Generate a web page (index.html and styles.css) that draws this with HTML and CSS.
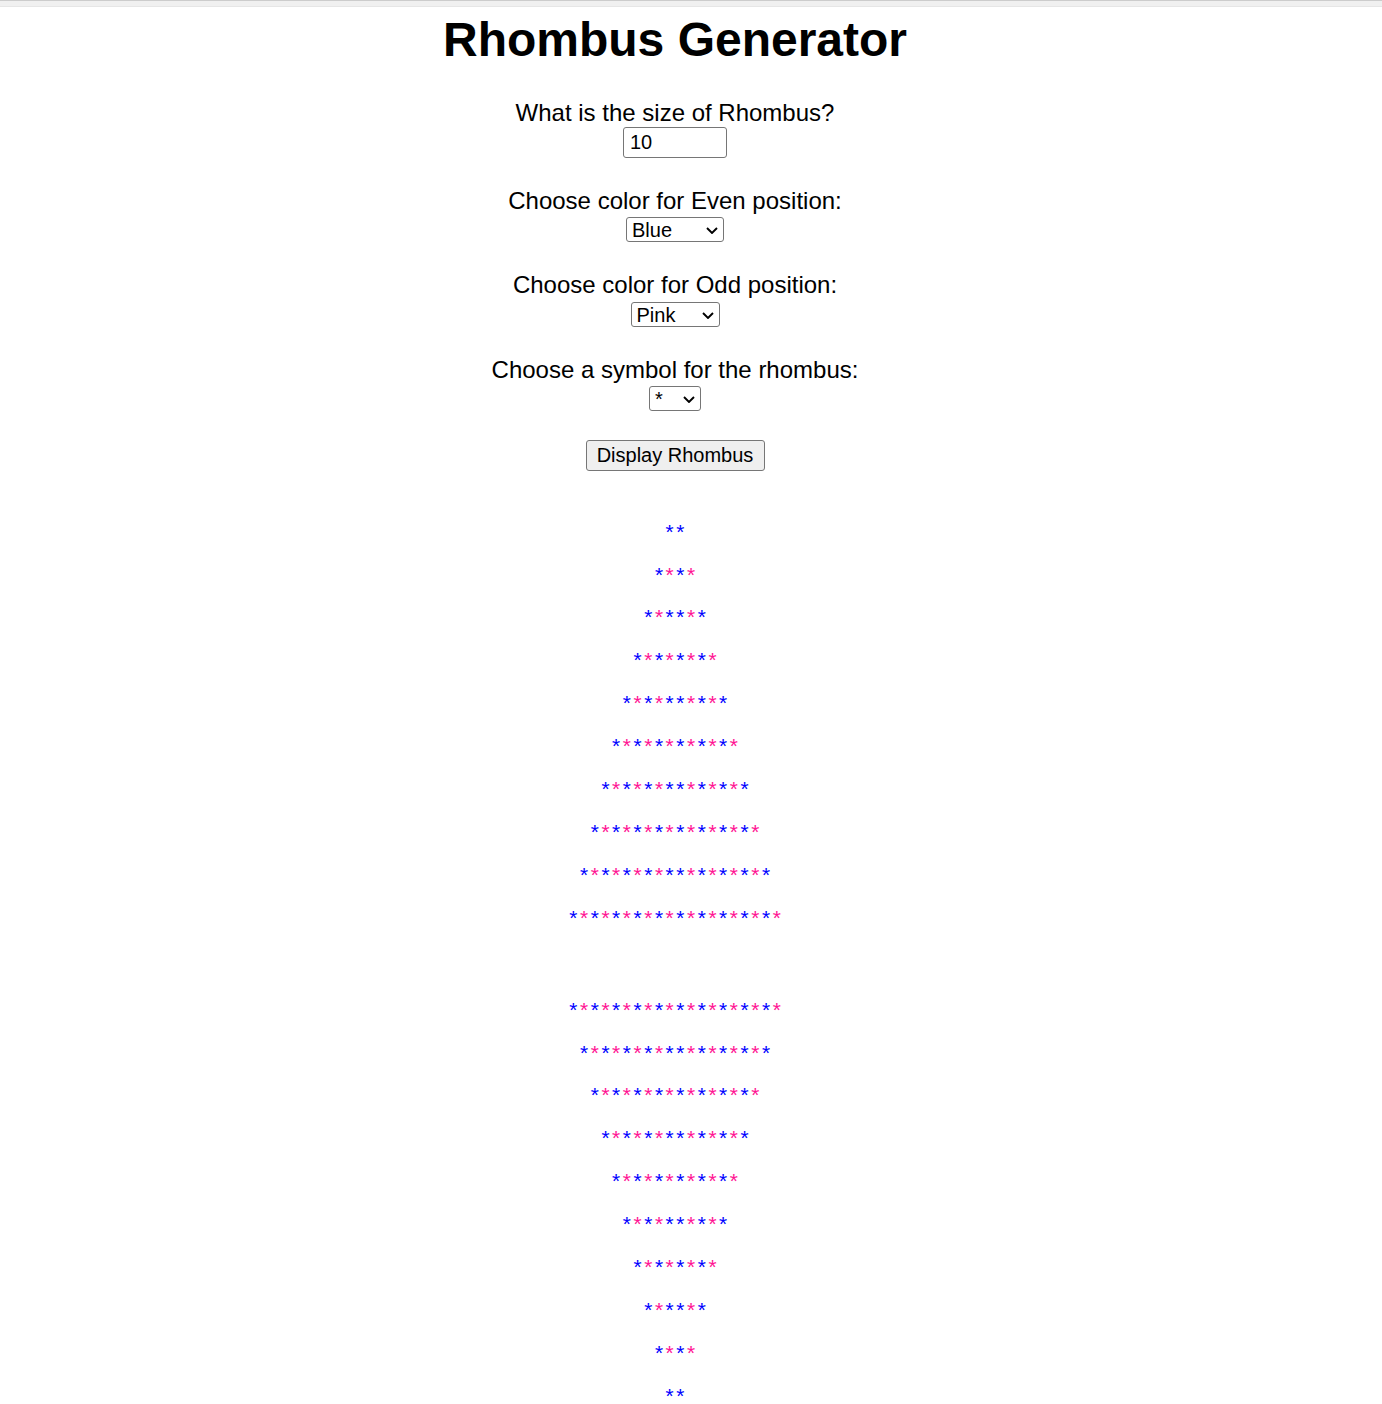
FILE: index.html
```html
<!DOCTYPE html>
<html lang="en">
<head>
<meta charset="utf-8">
<title>Rhombus Generator</title>
<link rel="stylesheet" href="styles.css">
</head>
<body>
<div class="topbar"></div>
<main class="page">
  <h1 class="title">Rhombus Generator</h1>
  <form class="form">
    <div class="field">
      <label class="label" for="size">What is the size of Rhombus?</label>
      <input class="size-input" id="size" type="text" value="10">
    </div>
    <div class="field">
      <label class="label" for="even">Choose color for Even position:</label>
      <span class="select-wrap">
        <select class="select select-even" id="even"><option>Blue</option><option>Red</option><option>Green</option></select>
        <svg class="chev" viewBox="0 0 12 7" aria-hidden="true"><path d="M1 1 L6 6 L11 1"/></svg>
      </span>
    </div>
    <div class="field">
      <label class="label" for="odd">Choose color for Odd position:</label>
      <span class="select-wrap">
        <select class="select select-odd" id="odd"><option>Pink</option><option>Red</option><option>Gold</option></select>
        <svg class="chev" viewBox="0 0 12 7" aria-hidden="true"><path d="M1 1 L6 6 L11 1"/></svg>
      </span>
    </div>
    <div class="field">
      <label class="label" for="symbol">Choose a symbol for the rhombus:</label>
      <span class="select-wrap">
        <select class="select select-symbol" id="symbol"><option>*</option><option>#</option><option>@</option></select>
        <svg class="chev" viewBox="0 0 12 7" aria-hidden="true"><path d="M1 1 L6 6 L11 1"/></svg>
      </span>
    </div>
    <button class="btn" type="button">Display Rhombus</button>
  </form>

  <div class="rhombus">
    <div class="half">
      <div class="row"><span class="b">*</span><span class="b">*</span></div>
      <div class="row"><span class="b">*</span><span class="p">*</span><span class="b">*</span><span class="p">*</span></div>
      <div class="row"><span class="b">*</span><span class="p">*</span><span class="b">*</span><span class="b">*</span><span class="p">*</span><span class="b">*</span></div>
      <div class="row"><span class="b">*</span><span class="p">*</span><span class="b">*</span><span class="p">*</span><span class="b">*</span><span class="p">*</span><span class="b">*</span><span class="p">*</span></div>
      <div class="row"><span class="b">*</span><span class="p">*</span><span class="b">*</span><span class="p">*</span><span class="b">*</span><span class="b">*</span><span class="p">*</span><span class="b">*</span><span class="p">*</span><span class="b">*</span></div>
      <div class="row"><span class="b">*</span><span class="p">*</span><span class="b">*</span><span class="p">*</span><span class="b">*</span><span class="p">*</span><span class="b">*</span><span class="p">*</span><span class="b">*</span><span class="p">*</span><span class="b">*</span><span class="p">*</span></div>
      <div class="row"><span class="b">*</span><span class="p">*</span><span class="b">*</span><span class="p">*</span><span class="b">*</span><span class="p">*</span><span class="b">*</span><span class="b">*</span><span class="p">*</span><span class="b">*</span><span class="p">*</span><span class="b">*</span><span class="p">*</span><span class="b">*</span></div>
      <div class="row"><span class="b">*</span><span class="p">*</span><span class="b">*</span><span class="p">*</span><span class="b">*</span><span class="p">*</span><span class="b">*</span><span class="p">*</span><span class="b">*</span><span class="p">*</span><span class="b">*</span><span class="p">*</span><span class="b">*</span><span class="p">*</span><span class="b">*</span><span class="p">*</span></div>
      <div class="row"><span class="b">*</span><span class="p">*</span><span class="b">*</span><span class="p">*</span><span class="b">*</span><span class="p">*</span><span class="b">*</span><span class="p">*</span><span class="b">*</span><span class="b">*</span><span class="p">*</span><span class="b">*</span><span class="p">*</span><span class="b">*</span><span class="p">*</span><span class="b">*</span><span class="p">*</span><span class="b">*</span></div>
      <div class="row"><span class="b">*</span><span class="p">*</span><span class="b">*</span><span class="p">*</span><span class="b">*</span><span class="p">*</span><span class="b">*</span><span class="p">*</span><span class="b">*</span><span class="p">*</span><span class="b">*</span><span class="p">*</span><span class="b">*</span><span class="p">*</span><span class="b">*</span><span class="p">*</span><span class="b">*</span><span class="p">*</span><span class="b">*</span><span class="p">*</span></div>
    </div>
    <div class="half">
      <div class="row"><span class="b">*</span><span class="p">*</span><span class="b">*</span><span class="p">*</span><span class="b">*</span><span class="p">*</span><span class="b">*</span><span class="p">*</span><span class="b">*</span><span class="p">*</span><span class="b">*</span><span class="p">*</span><span class="b">*</span><span class="p">*</span><span class="b">*</span><span class="p">*</span><span class="b">*</span><span class="p">*</span><span class="b">*</span><span class="p">*</span></div>
      <div class="row"><span class="b">*</span><span class="p">*</span><span class="b">*</span><span class="p">*</span><span class="b">*</span><span class="p">*</span><span class="b">*</span><span class="p">*</span><span class="b">*</span><span class="b">*</span><span class="p">*</span><span class="b">*</span><span class="p">*</span><span class="b">*</span><span class="p">*</span><span class="b">*</span><span class="p">*</span><span class="b">*</span></div>
      <div class="row"><span class="b">*</span><span class="p">*</span><span class="b">*</span><span class="p">*</span><span class="b">*</span><span class="p">*</span><span class="b">*</span><span class="p">*</span><span class="b">*</span><span class="p">*</span><span class="b">*</span><span class="p">*</span><span class="b">*</span><span class="p">*</span><span class="b">*</span><span class="p">*</span></div>
      <div class="row"><span class="b">*</span><span class="p">*</span><span class="b">*</span><span class="p">*</span><span class="b">*</span><span class="p">*</span><span class="b">*</span><span class="b">*</span><span class="p">*</span><span class="b">*</span><span class="p">*</span><span class="b">*</span><span class="p">*</span><span class="b">*</span></div>
      <div class="row"><span class="b">*</span><span class="p">*</span><span class="b">*</span><span class="p">*</span><span class="b">*</span><span class="p">*</span><span class="b">*</span><span class="p">*</span><span class="b">*</span><span class="p">*</span><span class="b">*</span><span class="p">*</span></div>
      <div class="row"><span class="b">*</span><span class="p">*</span><span class="b">*</span><span class="p">*</span><span class="b">*</span><span class="b">*</span><span class="p">*</span><span class="b">*</span><span class="p">*</span><span class="b">*</span></div>
      <div class="row"><span class="b">*</span><span class="p">*</span><span class="b">*</span><span class="p">*</span><span class="b">*</span><span class="p">*</span><span class="b">*</span><span class="p">*</span></div>
      <div class="row"><span class="b">*</span><span class="p">*</span><span class="b">*</span><span class="b">*</span><span class="p">*</span><span class="b">*</span></div>
      <div class="row"><span class="b">*</span><span class="p">*</span><span class="b">*</span><span class="p">*</span></div>
      <div class="row"><span class="b">*</span><span class="b">*</span></div>
    </div>
  </div>
</main>
</body>
</html>
```

FILE: styles.css
```css
* {
  box-sizing: border-box;
}

html,
body {
  margin: 0;
  padding: 0;
  background: #ffffff;
}

body {
  font-family: "Liberation Sans", Arial, sans-serif;
  color: #000000;
}

.topbar {
  height: 7px;
  background: #f0f0f0;
  border-top: 1px solid #cccccc;
  border-bottom: 1px solid #e6e6e6;
}

.page {
  width: 1350px;
  display: flex;
  flex-direction: column;
  align-items: center;
}

.title {
  margin: 5px 0 0;
  font-size: 48px;
  line-height: 56px;
  font-weight: bold;
}

.form {
  margin-top: 29.2px;
  display: flex;
  flex-direction: column;
  align-items: center;
  gap: 27px;
}

.field {
  display: flex;
  flex-direction: column;
  align-items: center;
}

.label {
  padding-top: 3px;
  font-size: 24px;
  line-height: 25px;
}

.size-input {
  margin-top: 1.8px;
  width: 104px;
  height: 31px;
  padding: 0 6px;
  font-family: "Liberation Sans", Arial, sans-serif;
  font-size: 20px;
  color: #000000;
  border: 1px solid #767676;
  border-radius: 3px;
  background: #ffffff;
}

.select-wrap {
  position: relative;
  display: inline-flex;
  margin-top: 4.3px;
}

.select {
  height: 25px;
  padding: 1px 0 0 5px;
  -webkit-appearance: none;
  appearance: none;
  font-family: "Liberation Sans", Arial, sans-serif;
  font-size: 20px;
  line-height: 22px;
  color: #000000;
  border: 1px solid #767676;
  border-radius: 3px;
  background: #ffffff;
}

.chev {
  position: absolute;
  right: 6px;
  top: 10px;
  width: 12px;
  height: 7px;
  fill: none;
  stroke: #000000;
  stroke-width: 1.9;
  pointer-events: none;
}

.select-even {
  width: 98px;
}

.select-odd {
  width: 89px;
}

.select-symbol {
  width: 52px;
}

.btn {
  margin-top: 2px;
  width: 179px;
  height: 31.4px;
  padding: 0;
  font-family: "Liberation Sans", Arial, sans-serif;
  font-size: 20px;
  color: #000000;
  background: #efefef;
  border: 1px solid #767676;
  border-radius: 3px;
}

.rhombus {
  margin-top: 53.45px;
  display: flex;
  flex-direction: column;
  align-items: center;
  gap: 71.9px;
}

.half {
  display: flex;
  flex-direction: column;
  align-items: center;
  gap: 22.9px;
}

.row {
  height: 20px;
  line-height: 20px;
  padding-right: 1.9px;
  font-family: "Liberation Mono", "Courier New", monospace;
  font-size: 21px;
  letter-spacing: -1.9px;
  white-space: nowrap;
}

.b {
  color: #0000ff;
}

.p {
  color: #ff1493;
}
```
